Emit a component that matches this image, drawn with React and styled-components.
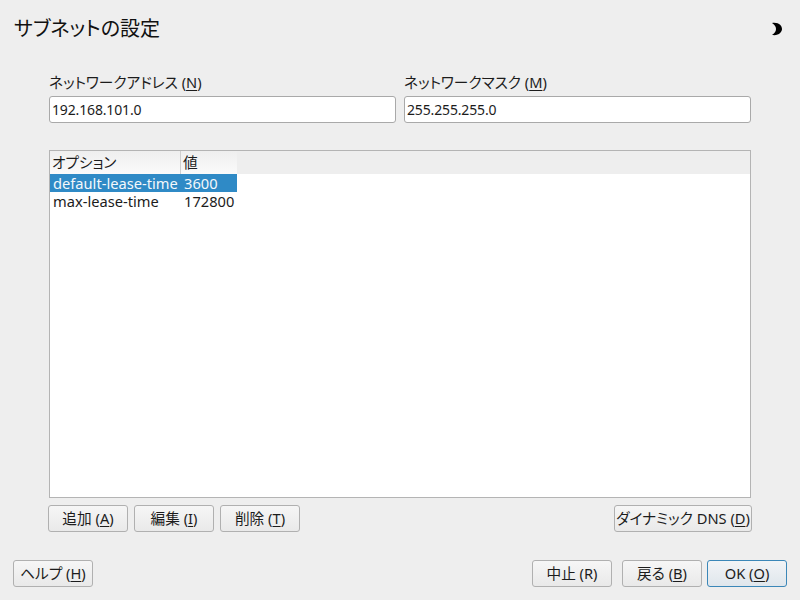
import styled, { createGlobalStyle } from 'styled-components';

const GlobalStyle = createGlobalStyle`
  html, body {
    margin: 0;
    padding: 0;
    background: #eeeeee;
  }
  body {
    font-family: "Noto Sans", "Noto Sans CJK JP", sans-serif;
    font-size: 14px;
    font-feature-settings: "palt";
    color: #1c1c1c;
  }
`;

const Page = styled.div`
  width: 800px;
  height: 600px;
  box-sizing: border-box;
  padding: 0 13px 13px 13px;
  display: flex;
  flex-direction: column;
  overflow: hidden;
`;

const TitleBar = styled.div`
  height: 58px;
  display: flex;
  align-items: center;
  justify-content: space-between;
  padding: 0 1px;
`;

const Title = styled.h1`
  margin: 0;
  font-size: 20px;
  font-weight: 400;
  line-height: 24px;
  color: #111;
`;

const MoonIcon = styled.svg`
  width: 12px;
  height: 14px;
  margin-right: 3px;
`;

const Content = styled.div`
  flex: 1;
  display: flex;
  flex-direction: column;
  padding: 0 36px 0 36px;
`;

const Fields = styled.div`
  display: grid;
  grid-template-columns: 347px 347px;
  column-gap: 8px;
`;

const Field = styled.label`
  display: flex;
  flex-direction: column;
`;

const FieldLabel = styled.span`
  height: 38px;
  line-height: 20px;
  padding-top: 14px;
  box-sizing: border-box;
  font-size: 14.67px;
`;

const Key = styled.span`
  text-decoration: underline;
  text-underline-offset: 2px;
`;

const TextInput = styled.div`
  height: 27px;
  box-sizing: border-box;
  background: #fff;
  border: 1px solid #a9a9a9;
  border-radius: 3px;
  padding: 0 2px;
  line-height: 26px;
  font-size: 14px;
  letter-spacing: -0.15px;
  color: #1c1c1c;
`;

const Table = styled.div`
  margin-top: 27px;
  height: 348px;
  box-sizing: border-box;
  background: #fff;
  border: 1px solid #b4b4b4;
  display: grid;
  grid-template-columns: 131px 56px 1fr;
  grid-template-rows: 23px 18px 18px;
  align-content: start;
`;

const HeadCell = styled.div`
  box-sizing: border-box;
  padding-left: 2px;
  line-height: 22px;
  font-size: 14.67px;
  background: linear-gradient(#efefef, #fafafa);
  border-right: ${(p) => (p.$divider ? '1px solid #cfcfcf' : 'none')};
`;

const HeadFill = styled.div`
  background: #eeeeee;
`;

const Cell = styled.div`
  line-height: 18px;
  padding-left: ${(p) => p.$pad}px;
  font-size: 14.67px;
  white-space: nowrap;
  background: ${(p) => (p.$selected ? '#2f8ac6' : 'transparent')};
  color: ${(p) => (p.$selected ? '#f4f8fb' : '#1c1c1c')};
`;

const ActionRow = styled.div`
  margin-top: 7px;
  margin-left: -1px;
  margin-right: -1px;
  display: flex;
  gap: 6px;
`;

const Spacer = styled.div`
  flex: 1;
`;

const Button = styled.button`
  width: ${(p) => p.$width || 80}px;
  height: 27px;
  padding: 0;
  box-sizing: border-box;
  border: 1px solid ${(p) => (p.$primary ? '#3b87b8' : '#b0b0b0')};
  border-radius: 3px;
  background: ${(p) =>
    p.$primary
      ? 'linear-gradient(#f2f4f6, #dfe6ec)'
      : 'linear-gradient(#f6f6f6, #e9e9e9)'};
  font-family: inherit;
  font-feature-settings: inherit;
  font-size: 14.67px;
  line-height: 25px;
  color: #1c1c1c;
  white-space: nowrap;
`;

const Footer = styled.div`
  margin-top: 28px;
  display: flex;
  align-items: center;
`;

const FooterRight = styled.div`
  display: flex;
`;

const FooterSlot = styled.div`
  margin-left: ${(p) => p.$gap}px;
`;

const App = () => (
  <Page>
    <GlobalStyle />
    <TitleBar>
      <Title>サブネットの設定</Title>
      <MoonIcon viewBox="0 0 12 14">
        <path d="M1 1 C8 0 11 4 11 7 C11 10 8 14 1 13 C4 11 5 9 5 7 C5 5 4 3 1 1 Z" fill="#000" />
      </MoonIcon>
    </TitleBar>
    <Content>
      <Fields>
        <Field>
          <FieldLabel>ネットワークアドレス (<Key>N</Key>)</FieldLabel>
          <TextInput>192.168.101.0</TextInput>
        </Field>
        <Field>
          <FieldLabel>ネットワークマスク (<Key>M</Key>)</FieldLabel>
          <TextInput>255.255.255.0</TextInput>
        </Field>
      </Fields>
      <Table>
        <HeadCell $divider>オプション</HeadCell>
        <HeadCell>値</HeadCell>
        <HeadFill />
        <Cell $pad={3} $selected>default-lease-time</Cell>
        <Cell $pad={3} $selected>3600</Cell>
        <Cell />
        <Cell $pad={3}>max-lease-time</Cell>
        <Cell $pad={3}>172800</Cell>
        <Cell />
      </Table>
      <ActionRow>
        <Button>追加 (<Key>A</Key>)</Button>
        <Button>編集 (<Key>I</Key>)</Button>
        <Button>削除 (<Key>T</Key>)</Button>
        <Spacer />
        <Button $width={138}>ダイナミック DNS (<Key>D</Key>)</Button>
      </ActionRow>
    </Content>
    <Footer>
      <Button>ヘルプ (<Key>H</Key>)</Button>
      <Spacer />
      <FooterRight>
        <FooterSlot $gap={0}><Button>中止 (R)</Button></FooterSlot>
        <FooterSlot $gap={10}><Button>戻る (<Key>B</Key>)</Button></FooterSlot>
        <FooterSlot $gap={5}><Button $primary>OK (<Key>O</Key>)</Button></FooterSlot>
      </FooterRight>
    </Footer>
  </Page>
);

export default App;
